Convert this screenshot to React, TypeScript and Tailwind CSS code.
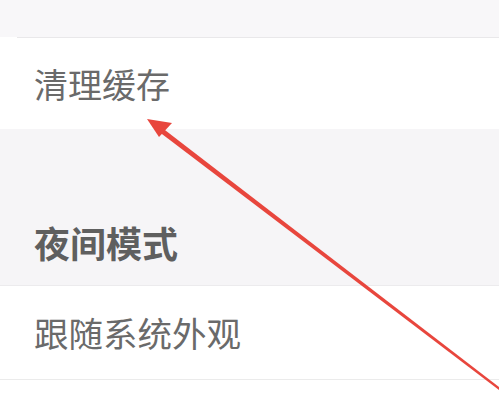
import React from 'react'

const font = { fontFamily: '"Noto Sans CJK SC", "Noto Sans", sans-serif' }

export default function App() {
  return (
    <div className="relative h-[403px] w-[499px] overflow-hidden bg-white" style={font}>
      {/* previous row, cut off */}
      <div className="h-[37px] bg-[#f8f7f9]" />
      <div className="ml-[17px] h-px bg-[#e9e8ea]" />

      <div className="flex h-[91px] items-center px-[34px]">
        <span className="text-[34px] leading-none text-[#6a6a6a]">清理缓存</span>
      </div>

      {/* section header */}
      <div className="flex h-[156px] items-end bg-[#f6f5f7] px-[34px] pb-[25px]">
        <span className="text-[36px] font-bold leading-none text-[#5f5f5f]">夜间模式</span>
      </div>
      <div className="h-px bg-[#ecebed]" />

      <div className="flex h-[93px] items-center px-[34px]">
        <span className="text-[34.5px] leading-none text-[#6a6a6a]">跟随系统外观</span>
      </div>
      <div className="h-px bg-[#ebebeb]" />
      <div className="h-[40px] bg-white" />

      {/* annotation arrow */}
      <svg className="pointer-events-none absolute left-0 top-0" width="499" height="403" viewBox="0 0 499 403">
        <polygon points="161,127 158,131 499,390 499,387" fill="#e8463d" />
        <polygon points="147,119 172,123 159,137" fill="#e8463d" />
      </svg>
    </div>
  )
}
